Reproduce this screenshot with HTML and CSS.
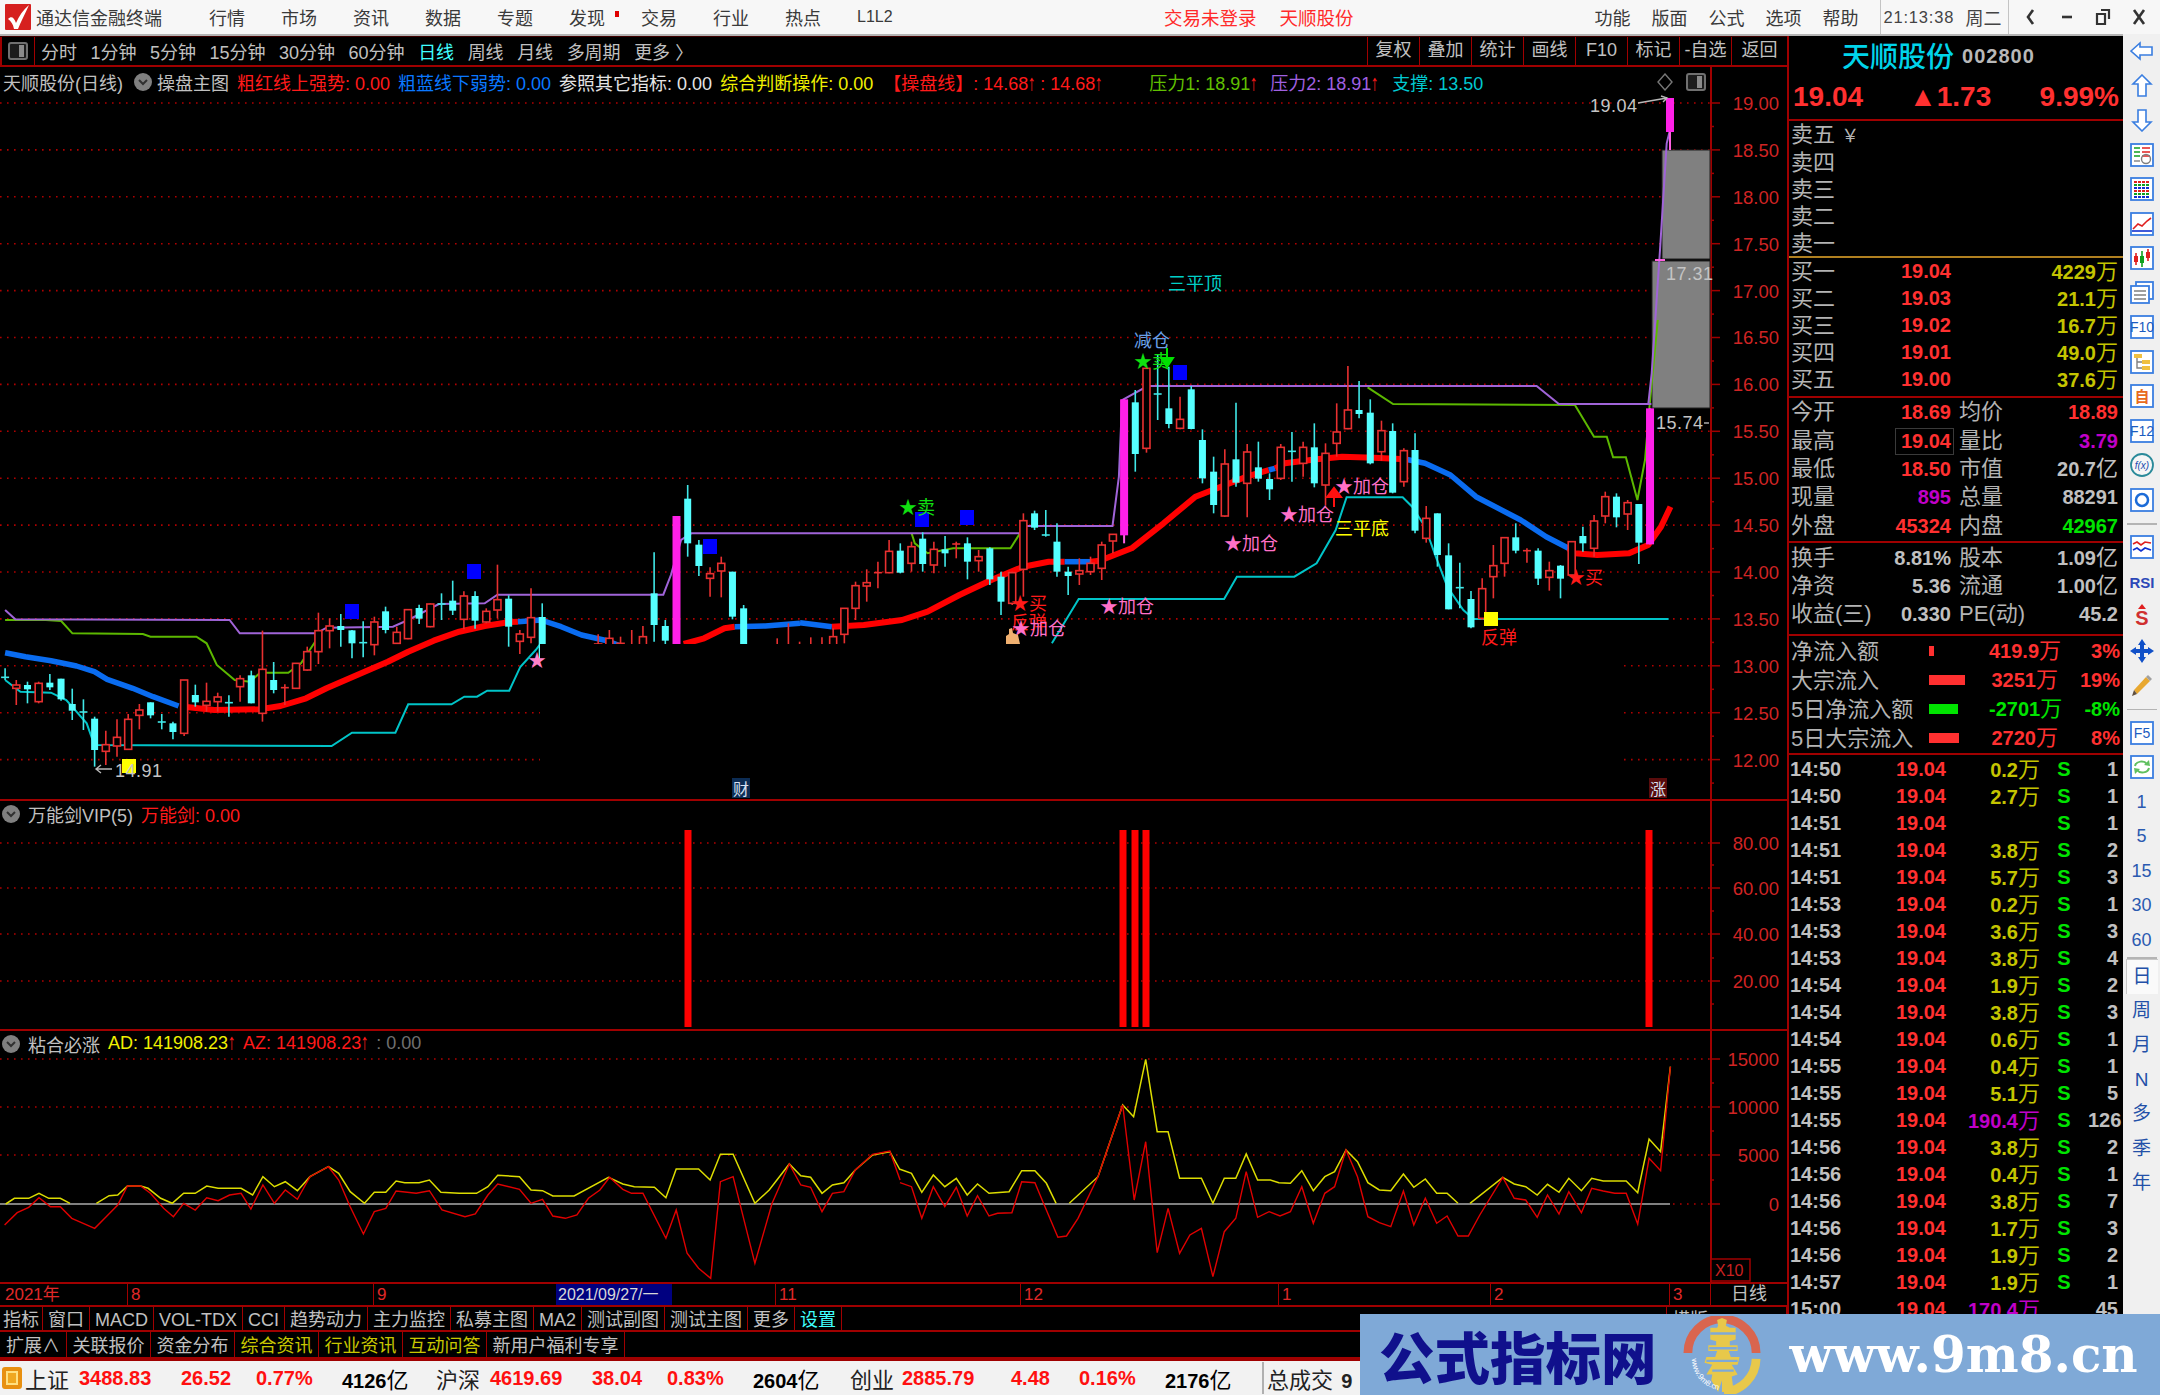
FILE: index.html
```html
<!DOCTYPE html>
<html lang="zh-CN">
<head>
<meta charset="utf-8">
<title>通达信金融终端</title>
<link rel="stylesheet" href="styles.css">
</head>
<body>
<div class="app">
  <header class="titlebar">
    <svg class="logo" viewBox="0 0 26 26"><rect class="logo-bg" width="26" height="26" rx="1"/><path class="logo-mark" d="M3 15 C6 12 9 13 11 19 C14 12 18 6 24 1 C20 10 16 17 13 25 L9 25 C8 20 6 17 3 15Z"/></svg>
    <span class="app-name">通达信金融终端</span>
    <nav class="menu menu-left">
      <span>行情</span><span>市场</span><span>资讯</span><span>数据</span><span>专题</span><span class="has-dot">发现</span><span>交易</span><span>行业</span><span>热点</span><span class="thin">L1L2</span>
    </nav>
    <span class="red-title login">交易未登录</span>
    <span class="red-title stock">天顺股份</span>
    <nav class="menu menu-right"><span>功能</span><span>版面</span><span>公式</span><span>选项</span><span>帮助</span></nav>
    <div class="clock"><span class="time">21:13:38</span><span>周二</span></div>
    <div class="winctl">
      <svg viewBox="0 0 18 18"><path class="ctl" d="M11 2 L6 9 L11 16"/></svg>
      <svg viewBox="0 0 18 18"><path class="ctl" d="M4 9 H14"/></svg>
      <svg viewBox="0 0 18 18"><path class="ctl-thin" d="M7 2 H15 V11 M3 6 H11 V16 H3 Z"/></svg>
      <svg viewBox="0 0 18 18"><path class="ctl" d="M4 2 L14 16 M14 2 L4 16"/></svg>
    </div>
  </header>

  <div class="main">
    <section class="chartcol">
      <div class="toolbar">
        <div class="tb-icon"><svg class="mini-btn" viewBox="0 0 20 18"><rect class="mb-o" x="1" y="1" width="18" height="16" rx="2"/><rect class="mb-i" x="11" y="3" width="5" height="12"/></svg></div>
        <div class="tb-periods">
          <span>分时</span><span>1分钟</span><span>5分钟</span><span>15分钟</span><span>30分钟</span><span>60分钟</span><span class="cyan">日线</span><span>周线</span><span>月线</span><span>多周期</span><span>更多 〉</span>
        </div>
        <div class="tb-actions">
          <span>复权</span><span>叠加</span><span>统计</span><span>画线</span><span>F10</span><span>标记</span><span>-自选</span><span>返回</span>
        </div>
      </div>

      <div class="pane pane-main">
        <div class="pane-head head-main">
          <span class="g">天顺股份(日线)</span>
          <svg class="chev" viewBox="0 0 18 18"><circle class="chev-c" cx="9" cy="9" r="9"/><path class="chev-p" d="M5 7 L9 11 L13 7"/></svg>
          <span class="g">操盘主图</span>
          <span class="red">粗红线上强势: 0.00</span>
          <span class="blue">粗蓝线下弱势: 0.00</span>
          <span class="white">参照其它指标: 0.00</span>
          <span class="yellow">综合判断操作: 0.00</span>
          <span class="red wide">【操盘线】: 14.68<b>↑</b> : 14.68<b>↑</b></span>
          <span class="lime">压力1: 18.91<b class="red">↑</b></span>
          <span class="purple">压力2: 18.91<b class="red">↑</b></span>
          <span class="teal">支撑: 13.50</span>
          <span class="head-tools">
            <svg class="diamond" viewBox="0 0 18 18"><path class="dia" d="M9 1 L16 9 L9 17 L2 9 Z"/></svg>
            <svg class="mini-btn" viewBox="0 0 20 18"><rect class="mb-o" x="1" y="1" width="18" height="16" rx="2"/><rect class="mb-i" x="11" y="3" width="5" height="12"/></svg>
          </span>
        </div>
        <svg class="pane-svg" viewBox="0 67 1787 733" width="1787" height="733">
          <g id="grid-main"></g>
          <rect class="grey-box" x="1662" y="150" width="48" height="109"/>
          <rect class="grey-box" x="1652" y="261" width="58" height="147"/>
          <g id="lines-main"></g>
          <g id="ma-main"></g>
          <g id="candles"></g>
          <rect class="mask" x="540" y="644" width="1082" height="131"/>
          <rect class="sq-blue" x="345" y="604" width="14" height="15"/>
          <rect class="sq-blue" x="467" y="564" width="14" height="15"/>
          <rect class="sq-blue" x="703" y="539" width="14" height="15"/>
          <rect class="sq-blue" x="915" y="512" width="14" height="15"/>
          <rect class="sq-blue" x="960" y="510" width="14" height="15"/>
          <rect class="sq-blue" x="1173" y="365" width="14" height="15"/>
          <rect class="sq-yellow" x="122" y="759" width="14" height="14"/>
          <rect class="sq-yellow" x="1484" y="612" width="14" height="14"/>
          <rect class="tile-blue" x="732" y="778" width="18" height="20"/>
          <rect class="tile-red" x="1649" y="778" width="18" height="20"/>
          <text class="tile-t" x="741" y="795">财</text>
          <text class="tile-t" x="1658" y="795">涨</text>

          <text class="ann cyan-t" x="1168" y="290">三平顶</text>
          <text class="ann sky-t" x="1134" y="347">减仓</text>
          <text class="ann green-t" x="1134" y="368">★卖</text>
          <text class="ann green-t" x="899" y="514">★卖</text>
          <path class="arrow-g" d="M1167 348 V360 M1161 358 H1173 L1167 367 Z"/>
          <text class="ann pink-t" x="1100" y="613">★加仓</text>
          <text class="ann pink-t" x="1224" y="550">★加仓</text>
          <text class="ann pink-t" x="1280" y="521">★加仓</text>
          <text class="ann pink-t" x="1335" y="493">★加仓</text>
          <text class="ann red-t" x="1011" y="629">反弹</text>
          <text class="ann pink-t" x="1012" y="635">★加仓</text>
          <text class="ann yellow-t" x="1335" y="535">三平底</text>
          <text class="ann red-t" x="1011" y="610">★买</text>
          <text class="ann red-t" x="1567" y="584">★买</text>
          <text class="ann red-t" x="1481" y="644">反弹</text>
          <path class="arrow-r" d="M1334 507 V496 M1327 497 L1334 488 L1341 497 Z"/>
          <path class="hand" d="M1006 644 V636 L1009 634 V629 L1012 628 L1013 633 L1018 635 L1020 644 Z"/>
          <text class="pink-star" x="528" y="667">★</text>

          <text class="lbl" x="1590" y="112">19.04</text>
          <path class="lbl-line" d="M1638 103 L1667 98 M1661 96 L1667 98 L1663 102"/>
          <text class="lbl" x="1666" y="280">17.31</text>
          <text class="lbl" x="1656" y="429">15.74</text>
          <path class="lbl-line" d="M1704 423 H1709"/>
          <text class="lbl" x="115" y="777">14.91</text>
          <path class="lbl-line" d="M96 769 H112 M101 765 L96 769 L101 773"/>

          <g class="axis-t">
            <text x="1779" y="110">19.00</text><text x="1779" y="157">18.50</text><text x="1779" y="204">18.00</text><text x="1779" y="251">17.50</text><text x="1779" y="298">17.00</text><text x="1779" y="344">16.50</text><text x="1779" y="391">16.00</text><text x="1779" y="438">15.50</text><text x="1779" y="485">15.00</text><text x="1779" y="532">14.50</text><text x="1779" y="579">14.00</text><text x="1779" y="626">13.50</text><text x="1779" y="673">13.00</text><text x="1779" y="720">12.50</text><text x="1779" y="767">12.00</text>
          </g>
        </svg>
      </div>

      <div class="pane pane-sword">
        <div class="pane-head head-sub">
          <svg class="chev" viewBox="0 0 18 18"><circle class="chev-c" cx="9" cy="9" r="9"/><path class="chev-p" d="M5 7 L9 11 L13 7"/></svg>
          <span class="g">万能剑VIP(5)</span>
          <span class="red">万能剑: 0.00</span>
        </div>
        <svg class="pane-svg" viewBox="0 801 1787 229" width="1787" height="229">
          <g id="grid-sword"></g>
          <g class="axis-t">
            <text x="1779" y="850">80.00</text><text x="1779" y="895">60.00</text><text x="1779" y="941">40.00</text><text x="1779" y="988">20.00</text>
          </g>
        </svg>
      </div>

      <div class="pane pane-adz">
        <div class="pane-head head-sub">
          <svg class="chev" viewBox="0 0 18 18"><circle class="chev-c" cx="9" cy="9" r="9"/><path class="chev-p" d="M5 7 L9 11 L13 7"/></svg>
          <span class="g">粘合必涨</span>
          <span class="yellow">AD: 141908.23<b class="red">↑</b></span>
          <span class="red">AZ: 141908.23<b>↑</b></span>
          <span class="dim">: 0.00</span>
        </div>
        <svg class="pane-svg" viewBox="0 1031 1787 253" width="1787" height="253">
          <g id="grid-adz"></g>
          <g id="lines-adz"></g>
          <rect class="x10-box" x="1711" y="1259" width="39" height="22"/>
          <text class="x10" x="1715" y="1276">X10</text>
          <g class="axis-t">
            <text x="1779" y="1066">15000</text><text x="1779" y="1114">10000</text><text x="1779" y="1162">5000</text><text x="1779" y="1211">0</text>
          </g>
        </svg>
      </div>

      <div class="timeaxis">
        <span>2021年</span><span>8</span><span>9</span><span class="cursor-date">2021/09/27/一</span><span class="blank"></span><span>11</span><span>12</span><span>1</span><span>2</span><span>3</span><span class="ax-period">日线</span>
      </div>
      <div class="tabs tabs-1">
        <span>指标</span><span>窗口</span><span>MACD</span><span>VOL-TDX</span><span>CCI</span><span>趋势动力</span><span>主力监控</span><span>私募主图</span><span>MA2</span><span>测试副图</span><span>测试主图</span><span>更多</span><span class="cyan">设置</span>
        <span class="tab-right">横版</span>
      </div>
      <div class="tabs tabs-2">
        <span>扩展∧</span><span>关联报价</span><span>资金分布</span><span class="olive">综合资讯</span><span class="olive">行业资讯</span><span class="olive">互动问答</span><span>新用户福利专享</span>
      </div>
    </section>

    <aside class="quote">
      <div class="q-name"><span class="stock-name">天顺股份</span><span class="stock-code">002800</span></div>
      <div class="q-price"><span>19.04</span><span class="q-change">▲1.73</span><span>9.99%</span></div>

      <div class="q-sec sec-sell">
        <div class="q"><span class="l">卖五 <i class="yen">￥</i></span></div>
        <div class="q"><span class="l">卖四</span></div>
        <div class="q"><span class="l">卖三</span></div>
        <div class="q"><span class="l">卖二</span></div>
        <div class="q"><span class="l">卖一</span></div>
      </div>
      <div class="q-sec sec-buy">
        <div class="q"><span class="l">买一</span><span class="v c-red">19.04</span><span class="v2 c-olive">4229<i class="u">万</i></span></div>
        <div class="q"><span class="l">买二</span><span class="v c-red">19.03</span><span class="v2 c-olive">21.1<i class="u">万</i></span></div>
        <div class="q"><span class="l">买三</span><span class="v c-red">19.02</span><span class="v2 c-olive">16.7<i class="u">万</i></span></div>
        <div class="q"><span class="l">买四</span><span class="v c-red">19.01</span><span class="v2 c-olive">49.0<i class="u">万</i></span></div>
        <div class="q"><span class="l">买五</span><span class="v c-red">19.00</span><span class="v2 c-olive">37.6<i class="u">万</i></span></div>
      </div>
      <div class="q-sec sec-stat">
        <div class="q"><span class="l">今开</span><span class="v c-red">18.69</span><span class="l2">均价</span><span class="v2 c-red">18.89</span></div>
        <div class="q"><span class="l">最高</span><span class="v c-red boxed">19.04</span><span class="l2">量比</span><span class="v2 c-mag">3.79</span></div>
        <div class="q"><span class="l">最低</span><span class="v c-red">18.50</span><span class="l2">市值</span><span class="v2 c-gray">20.7<i class="u">亿</i></span></div>
        <div class="q"><span class="l">现量</span><span class="v c-mag">895</span><span class="l2">总量</span><span class="v2 c-gray">88291</span></div>
        <div class="q"><span class="l">外盘</span><span class="v c-red">45324</span><span class="l2">内盘</span><span class="v2 c-green">42967</span></div>
      </div>
      <div class="q-sec sec-fund">
        <div class="q"><span class="l">换手</span><span class="v c-gray">8.81%</span><span class="l2">股本</span><span class="v2 c-gray">1.09<i class="u">亿</i></span></div>
        <div class="q"><span class="l">净资</span><span class="v c-gray">5.36</span><span class="l2">流通</span><span class="v2 c-gray">1.00<i class="u">亿</i></span></div>
        <div class="q"><span class="l">收益(三)</span><span class="v c-gray">0.330</span><span class="l2">PE(动)</span><span class="v2 c-gray">45.2</span></div>
      </div>
      <div class="q-sec sec-flow">
        <div class="f"><span class="l">净流入额</span><span class="fbar"><i class="bar-r" style="width:5px"></i></span><span class="fv c-red">419.9<i class="u">万</i></span><span class="fp c-red">3%</span></div>
        <div class="f"><span class="l">大宗流入</span><span class="fbar"><i class="bar-r" style="width:36px"></i></span><span class="fv c-red">3251<i class="u">万</i></span><span class="fp c-red">19%</span></div>
        <div class="f"><span class="l">5日净流入额</span><span class="fbar"><i class="bar-g" style="width:29px"></i></span><span class="fv c-green">-2701<i class="u">万</i></span><span class="fp c-green">-8%</span></div>
        <div class="f"><span class="l">5日大宗流入</span><span class="fbar"><i class="bar-r" style="width:30px"></i></span><span class="fv c-red">2720<i class="u">万</i></span><span class="fp c-red">8%</span></div>
      </div>
      <div class="ticks">
        <div class="t"><b>14:50</b><b class="c-red">19.04</b><b class="c-olive">0.2<i class="u">万</i></b><b class="c-green">S</b><b>1</b></div>
        <div class="t"><b>14:50</b><b class="c-red">19.04</b><b class="c-olive">2.7<i class="u">万</i></b><b class="c-green">S</b><b>1</b></div>
        <div class="t"><b>14:51</b><b class="c-red">19.04</b><b class="c-olive"></b><b class="c-green">S</b><b>1</b></div>
        <div class="t"><b>14:51</b><b class="c-red">19.04</b><b class="c-olive">3.8<i class="u">万</i></b><b class="c-green">S</b><b>2</b></div>
        <div class="t"><b>14:51</b><b class="c-red">19.04</b><b class="c-olive">5.7<i class="u">万</i></b><b class="c-green">S</b><b>3</b></div>
        <div class="t"><b>14:53</b><b class="c-red">19.04</b><b class="c-olive">0.2<i class="u">万</i></b><b class="c-green">S</b><b>1</b></div>
        <div class="t"><b>14:53</b><b class="c-red">19.04</b><b class="c-olive">3.6<i class="u">万</i></b><b class="c-green">S</b><b>3</b></div>
        <div class="t"><b>14:53</b><b class="c-red">19.04</b><b class="c-olive">3.8<i class="u">万</i></b><b class="c-green">S</b><b>4</b></div>
        <div class="t"><b>14:54</b><b class="c-red">19.04</b><b class="c-olive">1.9<i class="u">万</i></b><b class="c-green">S</b><b>2</b></div>
        <div class="t"><b>14:54</b><b class="c-red">19.04</b><b class="c-olive">3.8<i class="u">万</i></b><b class="c-green">S</b><b>3</b></div>
        <div class="t"><b>14:54</b><b class="c-red">19.04</b><b class="c-olive">0.6<i class="u">万</i></b><b class="c-green">S</b><b>1</b></div>
        <div class="t"><b>14:55</b><b class="c-red">19.04</b><b class="c-olive">0.4<i class="u">万</i></b><b class="c-green">S</b><b>1</b></div>
        <div class="t"><b>14:55</b><b class="c-red">19.04</b><b class="c-olive">5.1<i class="u">万</i></b><b class="c-green">S</b><b>5</b></div>
        <div class="t"><b>14:55</b><b class="c-red">19.04</b><b class="c-mag">190.4<i class="u">万</i></b><b class="c-green">S</b><b>126</b></div>
        <div class="t"><b>14:56</b><b class="c-red">19.04</b><b class="c-olive">3.8<i class="u">万</i></b><b class="c-green">S</b><b>2</b></div>
        <div class="t"><b>14:56</b><b class="c-red">19.04</b><b class="c-olive">0.4<i class="u">万</i></b><b class="c-green">S</b><b>1</b></div>
        <div class="t"><b>14:56</b><b class="c-red">19.04</b><b class="c-olive">3.8<i class="u">万</i></b><b class="c-green">S</b><b>7</b></div>
        <div class="t"><b>14:56</b><b class="c-red">19.04</b><b class="c-olive">1.7<i class="u">万</i></b><b class="c-green">S</b><b>3</b></div>
        <div class="t"><b>14:56</b><b class="c-red">19.04</b><b class="c-olive">1.9<i class="u">万</i></b><b class="c-green">S</b><b>2</b></div>
        <div class="t"><b>14:57</b><b class="c-red">19.04</b><b class="c-olive">1.9<i class="u">万</i></b><b class="c-green">S</b><b>1</b></div>
        <div class="t"><b>15:00</b><b class="c-red">19.04</b><b class="c-mag">170.4<i class="u">万</i></b><b></b><b>45</b></div>
      </div>
    </aside>

    <aside class="side">
      <div class="si first"><svg viewBox="0 0 24 24"><path class="ic-out" d="M1 12 L10 4 V8 H22 V16 H10 V20 Z"/></svg></div>
      <div class="si"><svg viewBox="0 0 24 24"><path class="ic-out" d="M12 1 L21 10 H16 V22 H8 V10 H3 Z"/></svg></div>
      <div class="si"><svg viewBox="0 0 24 24"><path class="ic-out" d="M12 23 L21 14 H16 V2 H8 V14 H3 Z"/></svg></div>
      <div class="si"><svg viewBox="0 0 24 24"><rect class="ic-box" x="1" y="1" width="22" height="22"/><path class="s-green" d="M4 5 H10 M4 9 H10 M4 13 H10"/><path class="s-red" d="M12 5 H20 M12 9 H20 M12 13 H20"/><circle class="s-gray" cx="16" cy="16" r="4.5"/><path class="s-gray" d="M4 18 H10"/></svg></div>
      <div class="si"><svg viewBox="0 0 24 24"><rect class="ic-box" x="1" y="1" width="22" height="22"/><path class="s-red d2" d="M4 5 H20"/><path class="s-green d2" d="M4 8 H20"/><path class="s-blue d2" d="M4 11 H20"/><path class="s-red d2" d="M4 14 H20"/><path class="s-green d2" d="M4 17 H20"/><path class="s-blue d2" d="M4 20 H20"/></svg></div>
      <div class="si"><svg viewBox="0 0 24 24"><rect class="ic-box" x="1" y="1" width="22" height="22"/><path class="s-red" d="M3 17 L8 12 L12 14 L17 9 L21 6"/><path class="s-blue" d="M2 19 H22"/></svg></div>
      <div class="si"><svg viewBox="0 0 24 24"><rect class="ic-box" x="1" y="1" width="22" height="22"/><path class="s-red" d="M6 7 V19"/><path class="s-green" d="M12 5 V21"/><path class="s-red" d="M18 3 V15"/><rect class="f-red" x="4" y="10" width="4" height="6"/><rect class="f-green" x="10" y="10" width="4" height="7"/><rect class="f-red" x="16" y="6" width="4" height="6"/></svg></div>
      <div class="si"><svg viewBox="0 0 24 24"><rect class="ic-box" x="6" y="1" width="17" height="17"/><rect class="ic-box" x="1" y="5" width="18" height="17"/><path class="s-gray" d="M4 10 H16 M4 14 H16 M4 18 H16"/></svg></div>
      <div class="si"><svg viewBox="0 0 24 24"><rect class="ic-box" x="1" y="1" width="22" height="22"/><text class="ic-t" x="12" y="17">F10</text></svg></div>
      <div class="si"><svg viewBox="0 0 24 24"><rect class="ic-box" x="1" y="1" width="22" height="22"/><rect class="f-gold" x="4" y="4" width="8" height="4"/><rect class="f-gold" x="12" y="10" width="8" height="4"/><rect class="f-gold" x="12" y="16" width="8" height="4"/><path class="s-gray" d="M7 8 V18 H12 M7 12 H12"/></svg></div>
      <div class="si"><svg viewBox="0 0 24 24"><rect class="ic-box" x="1" y="1" width="22" height="22"/><text class="ic-t orange" x="12" y="18">自</text></svg></div>
      <div class="si"><svg viewBox="0 0 24 24"><rect class="ic-box" x="1" y="1" width="22" height="22"/><text class="ic-t" x="12" y="17">F12</text></svg></div>
      <div class="si"><svg viewBox="0 0 24 24"><circle class="ic-teal" cx="12" cy="12" r="11"/><text class="ic-fx" x="12" y="16">f(x)</text></svg></div>
      <div class="si"><svg viewBox="0 0 24 24"><rect class="ic-box" x="1" y="1" width="22" height="22"/><circle class="ic-ring" cx="12" cy="12" r="6"/></svg></div>
      <div class="sep"></div>
      <div class="si"><svg viewBox="0 0 24 24"><rect class="ic-box" x="1" y="1" width="22" height="22"/><path class="s-red" d="M3 9 L7 7 L11 10 L15 7 L21 8"/><path class="s-blue" d="M3 15 L7 13 L11 16 L15 13 L21 15"/></svg></div>
      <div class="si"><svg viewBox="0 0 24 24"><text class="ic-rsi" x="12" y="18">RSI</text></svg></div>
      <div class="si"><svg viewBox="0 0 24 24"><text class="ic-s" x="12" y="21">S</text><path class="f-red" d="M12 0 L16 5 H8 Z"/></svg></div>
      <div class="si"><svg viewBox="0 0 24 24"><path class="f-blue" d="M12 0 L16 6 H14 V10 H18 V8 L24 12 L18 16 V14 H14 V18 H16 L12 24 L8 18 H10 V14 H6 V16 L0 12 L6 8 V10 H10 V6 H8 Z"/></svg></div>
      <div class="si"><svg viewBox="0 0 24 24"><path class="f-gold2" d="M4 17 L16 4 L20 8 L7 21 Z"/><path class="f-dark" d="M2 23 L4 17 L7 21 Z"/><path class="f-pink" d="M16 4 L18 2 L22 6 L20 8 Z"/></svg></div>
      <div class="sep"></div>
      <div class="si"><svg viewBox="0 0 24 24"><rect class="ic-box" x="1" y="1" width="22" height="22"/><text class="ic-t" x="12" y="17">F5</text></svg></div>
      <div class="si"><svg viewBox="0 0 24 24"><rect class="ic-box" x="1" y="1" width="22" height="22"/><path class="s-lgreen" d="M5 11 C6 6 14 5 17 9 M19 13 C18 18 10 19 7 15"/><path class="f-lgreen" d="M14 10 L20 11 L19 5 Z M10 14 L4 13 L5 19 Z"/></svg></div>
      <div class="sn">1</div><div class="sn">5</div><div class="sn">15</div><div class="sn">30</div><div class="sn">60</div>
      <div class="sep thin"></div>
      <div class="sc active">日</div><div class="sc">周</div><div class="sc">月</div><div class="sc">N</div><div class="sc">多</div><div class="sc">季</div><div class="sc">年</div>
    </aside>
  </div>

  <footer class="status">
    <i class="st-icon"></i>
    <span class="st-l">上证</span><span class="st-n">3488.83</span><span class="st-n">26.52</span><span class="st-n">0.77%</span><span class="st-a">4126<i class="u">亿</i></span>
    <span class="st-l">沪深</span><span class="st-n">4619.69</span><span class="st-n">38.04</span><span class="st-n">0.83%</span><span class="st-a">2604<i class="u">亿</i></span>
    <span class="st-l">创业</span><span class="st-n">2885.79</span><span class="st-n">4.48</span><span class="st-n">0.16%</span><span class="st-a">2176<i class="u">亿</i></span>
    <span class="st-total">总成交 <b>9</b></span>
  </footer>

  <div class="banner">
    <span class="banner-title">公式指标网</span>
    <svg class="banner-logo" viewBox="0 0 80 80">
      <path class="bl-red" d="M5 38 A35 35 0 0 1 75 38"/>
      <path class="bl-yel" d="M75 44 A35 35 0 0 1 42 78"/>
      <path class="bl-fig" d="M40 2 L45 4 L44 10 L48 12 L54 12 V24 L48 26 V30 H56 V36 H47 L49 42 L58 42 L56 50 L50 50 L56 60 L50 62 L52 78 L40 78 L40 66 L36 78 L29 66 L30 60 L24 60 L30 50 L22 48 L24 42 L33 42 L35 36 L26 36 V30 H34 V26 L28 24 V12 L35 12 L36 10 L35 4 Z"/>
      <path class="bl-cut" d="M28 18 H54 M27 33 H55 M24 46 H56 M30 56 H52"/>
      <path id="curve" class="bl-none" d="M9 44 A33 33 0 0 0 38 76"/>
      <text class="bl-text"><textPath href="#curve">www.9m8.cn</textPath></text>
    </svg>
    <span class="banner-url">www.9m8.cn</span>
  </div>
</div>
<script src="chart.js"></script>
</body>
</html>
```

FILE: styles.css
```css
* { box-sizing: border-box; }
html, body { margin: 0; padding: 0; background: #000; }
body { font-family: "Liberation Sans", "Noto Sans CJK SC", sans-serif; font-size: 18px; color: #c0c0c0; }
i, b { font-style: normal; }
.app { position: relative; width: 2160px; height: 1395px; overflow: hidden; background: #000; }

/* title bar */
.titlebar { display: flex; align-items: center; height: 36px; padding-left: 5px; background: #f7f7f7; border-bottom: 2px solid #b4b4b4; color: #333; white-space: nowrap; }
.logo { width: 26px; height: 26px; flex: none; }
.logo-bg { fill: #d6201f; }
.logo-mark { fill: #fff; }
.app-name { margin-left: 5px; width: 126px; font-size: 18px; color: #3a3a3a; }
.menu { display: flex; align-items: center; }
.menu span { display: block; width: 36px; font-size: 18px; color: #3a3a3a; }
.menu-left { margin-left: 47px; gap: 36px; }
.menu-left .thin { font-size: 16px; }
.has-dot { position: relative; }
.has-dot::after { content: ""; position: absolute; left: 46px; top: 7px; width: 4px; height: 6px; background: #e00000; }
.red-title { font-size: 18.5px; color: #ff2a2a; }
.login { margin-left: 271px; }
.stock { margin-left: 23px; }
.menu-right { margin-left: 241px; gap: 21px; }
.clock { display: flex; align-items: center; gap: 8px; margin-left: 21px; padding: 0 6px 0 3px; height: 34px; border-left: 1px solid #c4c4c4; border-right: 1px solid #c4c4c4; color: #444; }
.time { font-size: 16.5px; letter-spacing: .8px; width: 74px; }
.winctl { display: flex; align-items: center; gap: 18px; margin-left: 13px; }
.winctl svg { width: 18px; height: 18px; }
.ctl { fill: none; stroke: #333; stroke-width: 2.6; }
.ctl-thin { fill: none; stroke: #333; stroke-width: 2.2; }

/* layout */
.main { display: flex; height: 1323px; }
.chartcol { width: 1787px; flex: none; }

/* toolbar */
.toolbar { display: flex; height: 31px; border-bottom: 2px solid #a00000; border-top: 1px solid #400000; }
.tb-icon { width: 35px; border-left: 2px solid #a00000; border-right: 1px solid #a00000; display: flex; align-items: center; justify-content: center; }
.mini-btn { width: 20px; height: 18px; }
.mb-o { fill: #1c1c1c; stroke: #707070; stroke-width: 2; }
.mb-i { fill: #8a8a8a; }
.tb-periods { display: flex; align-items: center; gap: 13.5px; padding-left: 6px; font-size: 18px; white-space: nowrap; }
.tb-actions { display: flex; margin-left: auto; }
.tb-actions span { width: 52px; border-left: 1px solid #a00000; text-align: center; line-height: 27px; font-size: 18px; white-space: nowrap; }
.tb-actions span:last-child { width: 56px; }
.cyan { color: #40ffff; }

/* panes */
.pane { position: relative; width: 1787px; border-bottom: 2px solid #a00000; }
.pane-main { height: 734px; }
.pane-sword { height: 230px; }
.pane-adz { height: 253px; }
.pane-svg { display: block; }
.pane-head { position: absolute; left: 0; top: -1px; z-index: 2; display: flex; align-items: center; height: 27px; width: 1710px; white-space: nowrap; font-size: 18px; }
.pane-head b { font-weight: 700; font-size: 22px; line-height: 18px; display: inline-block; transform: scaleX(.75); margin: 0 -2px; }
.head-main { gap: 8px; padding-left: 3px; top: 1px; }
.head-main .chev { margin: 0 -3px 0 3px; }
.head-main .wide { margin-left: 2px; width: 258px; }
.head-main .purple { margin-left: 5px; }
.head-main .teal { margin-left: 6px; }
.head-tools { margin-left: auto; margin-right: 4px; display: flex; align-items: center; gap: 12px; }
.head-sub { gap: 8px; padding-left: 2px; }
.chev { width: 18px; height: 18px; flex: none; }
.chev-c { fill: #808080; }
.chev-p { fill: none; stroke: #303030; stroke-width: 2; }
.diamond { width: 18px; height: 18px; }
.dia { fill: none; stroke: #777; stroke-width: 1.4; }
.g { color: #c0c0c0; }
.red { color: #ff1a1a; }
.blue { color: #0a78ff; }
.white { color: #e4e4e4; }
.yellow { color: #f0f000; }
.lime { color: #60c000; }
.purple { color: #a060e0; }
.teal { color: #00c8d0; }
.dim { color: #707070; }
.olive { color: #c8c800; }

/* chart svg parts */
.grid-dot { stroke: #b00000; stroke-width: 1.6; stroke-dasharray: 1.6 5.4; fill: none; }
.axis-line { stroke: #a00000; stroke-width: 2; }
.axis-tick { stroke: #a00000; stroke-width: 1.5; }
.axis-t text { fill: #d02424; font-size: 18.5px; text-anchor: end; }
.grey-box { fill: #808080; stroke: #202020; stroke-width: 1; }
.mask { fill: #000; }
.l-cyan { fill: none; stroke: #00c4c8; stroke-width: 2; }
.l-green { fill: none; stroke: #5cb800; stroke-width: 2; }
.l-purple { fill: none; stroke: #a064d8; stroke-width: 2; }
.ma-red { fill: none; stroke: #ff0000; stroke-width: 6; stroke-linejoin: round; }
.ma-blue { fill: none; stroke: #0a6cf0; stroke-width: 5.5; stroke-linejoin: round; }
.c-wick-r { stroke: #e83030; stroke-width: 1.6; }
.c-wick-c { stroke: #40e8e8; stroke-width: 1.6; }
.c-body-r { fill: #000; stroke: #e83030; stroke-width: 1.6; }
.c-body-c { fill: #55ffff; }
.c-body-m { fill: #ff20e8; }
.c-wick-m { stroke: #ff60e0; stroke-width: 2; }
.sq-blue { fill: #0000ff; }
.sq-yellow { fill: #ffff00; }
.tile-blue { fill: #0c2c54; }
.tile-red { fill: #5a0c0c; }
.tile-t { fill: #d8e0f0; font-size: 16px; text-anchor: middle; }
.ann { font-size: 18px; }
.cyan-t { fill: #00d0c8; }
.sky-t { fill: #6aa0e8; }
.green-t { fill: #10e010; }
.pink-t { fill: #ff70c8; }
.yellow-t { fill: #ffff00; }
.red-t { fill: #ff1a1a; }
.pink-star { fill: #ff80c8; font-size: 18px; }
.arrow-g { fill: #00e000; stroke: #00e000; stroke-width: 2; }
.arrow-r { fill: #ff1010; stroke: #ff1010; stroke-width: 2; }
.hand { fill: #f0b070; }
.lbl { fill: #c4c4c4; font-size: 18px; letter-spacing: .5px; }
.lbl-line { fill: none; stroke: #b8b8b8; stroke-width: 1.4; }
.bar-sword { fill: #ff0000; }
.l-yellow { fill: none; stroke: #dcdc00; stroke-width: 1.5; }
.l-red { fill: none; stroke: #e00000; stroke-width: 1.4; }
.zero { stroke: #808080; stroke-width: 2; }
.x10-box { fill: #000; stroke: #a00000; stroke-width: 1.5; }
.x10 { fill: #c82020; font-size: 16px; }

/* time axis & tabs */
.timeaxis { display: grid; grid-template-columns: 127px 246px 183px 116px 103px 245px 258px 212px 179px 41px 77px; height: 23px; line-height: 21px; border-bottom: 2px solid #a00000; color: #e02828; font-size: 17px; background: #000; }
.timeaxis span { border-left: 1px solid #a00000; padding-left: 3px; }
.timeaxis span:first-child { border-left: 0; padding-left: 5px; }
.timeaxis .cursor-date { background: #000080; color: #d8d8d8; font-size: 16px; padding-left: 2px; white-space: nowrap; border-left: 0; }
.timeaxis .blank { border-left: 0; }
.timeaxis .ax-period { color: #c0c0c0; text-align: center; padding: 0; font-size: 18px; }
.tabs { display: flex; white-space: nowrap; font-size: 18px; border-bottom: 2px solid #a00000; }
.tabs span { padding: 0 5px; border-right: 1px solid #a00000; line-height: 26px; }
.tabs-1 { height: 25px; }
.tabs-1 span { height: 23px; overflow: hidden; }
.tabs-1 span:first-child { padding: 0 3px; }
.tabs-1 .tab-right { margin-left: auto; border-left: 1px solid #a00000; padding-right: 78px; }
.tabs-2 { height: 27px; }
.tabs-2 span { line-height: 28px; height: 25px; overflow: hidden; padding: 0 5.5px; }
.tabs-2 span:first-child { padding: 0 6px; }

/* quote */
.quote { width: 336px; flex: none; border-left: 2px solid #a00000; overflow: hidden; }
.q-name { display: flex; align-items: center; height: 38px; padding: 0 0 0 53px; }
.stock-name { color: #00d4ea; font-size: 28px; letter-spacing: 0; font-weight: 500; }
.stock-code { margin-left: 8px; font-size: 20px; font-weight: 700; letter-spacing: 1px; color: #b8b8b8; margin-top: 3px; }
.q-price { display: grid; grid-template-columns: 116px 124px 1fr; align-items: center; height: 45px; padding: 0 4px 0 4px; font-size: 28px; font-weight: 700; color: #ff3030; }
.q-price span:last-child { text-align: right; }
.q-sec { border-top: 2px solid #a00000; padding-left: 2px; padding-right: 5px; }
.sec-sell { height: 137px; padding-top: 1px; }
.sec-buy { height: 140px; border-top-color: #b08020; }
.sec-stat { height: 145px; }
.sec-fund { height: 93px; padding-top: 1px; }
.sec-flow { height: 119px; padding-right: 3px; }
.q { display: flex; height: 27px; line-height: 27px; align-items: center; white-space: nowrap; }
.sec-stat .q { height: 28.4px; line-height: 28px; }
.sec-fund .q { height: 28px; line-height: 28px; }
.l { display: block; width: 100px; font-size: 22px; color: #b4b4b4; flex: none; }
.l2 { display: block; margin-left: 8px; font-size: 22px; color: #b4b4b4; }
.v { display: block; width: 60px; text-align: right; font-weight: 700; font-size: 20px; flex: none; }
.v2 { display: block; margin-left: auto; text-align: right; font-weight: 700; font-size: 20px; }
.u { font-weight: 400; font-size: 22px; }
.yen { font-size: 18px; }
.boxed { position: relative; }
.boxed::before { content: ""; position: absolute; left: 4px; right: -3px; top: 1px; bottom: 0; border: 1px solid #3a3a3a; }
.c-red { color: #ff3030; }
.c-olive { color: #c4c400; }
.c-mag { color: #c000c8; }
.c-gray { color: #c0c0c0; }
.c-green { color: #00e400; }
.f { display: grid; grid-template-columns: 138px 60px 69px 1fr; height: 29px; line-height: 29px; align-items: center; white-space: nowrap; }
.f .l { width: 138px; }
.fbar { display: flex; align-items: center; }
.fbar i { display: block; height: 10px; }
.bar-r { background: #ff3030; }
.bar-g { background: #00e400; }
.fv, .fp { text-align: right; font-weight: 700; font-size: 20px; }
.ticks { border-top: 2px solid #a00000; padding: 1px 5px 0 1px; }
.t { display: grid; grid-template-columns: 52px 104px 94px 48px 1fr; height: 27px; line-height: 27px; font-size: 20px; font-weight: 700; color: #c0c0c0; white-space: nowrap; }
.t b { text-align: right; }
.t b:first-child { text-align: left; }
.t b:nth-child(4) { text-align: center; }

/* sidebar */
.side { width: 37px; flex: none; background: #f0f0f0; display: flex; flex-direction: column; align-items: center; margin-top: -2px; overflow: visible; }
.si { height: 34.5px; flex: none; display: flex; align-items: center; justify-content: center; }
.si svg { width: 24px; height: 24px; }
.sep { width: 30px; height: 13px; flex: none; position: relative; }
.sep::after { content: ""; position: absolute; left: 0; right: 0; top: 6px; height: 1.5px; background: #b4b4b4; }
.sep.thin { height: 2px; }
.sep.thin::after { top: 0; }
.sn { height: 34.5px; line-height: 34.5px; flex: none; font-size: 18px; color: #2a5ab0; text-align: center; }
.sc { height: 34.5px; line-height: 34.5px; flex: none; width: 32px; text-align: center; font-size: 19px; color: #2350a8; }
.sc.active { background: #fafafa; border-left: 1px solid #c8c8c8; border-top: 1px solid #c8c8c8; }
.ic-out { fill: #fff; stroke: #3a7ee0; stroke-width: 1.6; }
.ic-box { fill: #fff; stroke: #3a7ee0; stroke-width: 1.8; }
.s-red { fill: none; stroke: #e02020; stroke-width: 1.6; }
.s-green { fill: none; stroke: #10a020; stroke-width: 1.6; }
.s-blue { fill: none; stroke: #1030d0; stroke-width: 1.6; }
.s-gray { fill: none; stroke: #808080; stroke-width: 1.4; }
.d2 { stroke-width: 2; stroke-dasharray: 3 1; }
.f-red { fill: #e02020; }
.f-green { fill: #10a020; }
.f-gold { fill: #f0c040; }
.f-blue { fill: #1050c8; }
.f-gold2 { fill: #e8a830; }
.f-dark { fill: #605040; }
.f-pink { fill: #a0a0a0; }
.s-lgreen { fill: none; stroke: #60c060; stroke-width: 2; }
.f-lgreen { fill: #60c060; }
.ic-t { fill: #1c5cc0; font-size: 14px; text-anchor: middle; }
.ic-t.orange { fill: #e86a20; font-size: 15px; font-weight: 700; }
.ic-teal { fill: #f6f6f6; stroke: #2a8a9a; stroke-width: 1.8; }
.ic-fx { fill: #1c4cb0; font-size: 10px; font-style: italic; text-anchor: middle; }
.ic-ring { fill: none; stroke: #1c6cd8; stroke-width: 2.5; }
.ic-rsi { fill: #2c48b8; font-size: 15px; font-weight: 700; text-anchor: middle; }
.ic-s { fill: #d03030; font-size: 20px; font-weight: 700; text-anchor: middle; }

/* status bar */
.status { display: grid; grid-template-columns: 25px 54px 102px 75px 86px 94px 54px 102px 75px 86px 97px 52px 109px 68px 86px 97px 1fr; align-items: center; height: 36px; background: #f2f2f2; border-top: 2px solid #a00000; white-space: nowrap; color: #000; }
.st-icon { display: block; width: 20px; height: 22px; margin-left: 2px; border-radius: 3px; background: #f0a820; border: 4px solid #e89010; box-shadow: inset 0 0 0 2px #ffe080; }
.st-l { font-size: 22px; color: #222; }
.st-n { font-size: 20px; font-weight: 700; color: #ff1010; }
.st-a { font-size: 20px; font-weight: 700; color: #000; }
.st-total { border-left: 2px solid #b0b0b0; padding-left: 3px; font-size: 22px; color: #222; }
.st-total b { font-size: 20px; margin-left: 2px; }

/* watermark banner */
.banner { position: absolute; left: 1360px; top: 1314px; width: 800px; height: 81px; z-index: 5; display: flex; align-items: center; padding-left: 19px; background: #7fa9d7; }
.banner-title { font-size: 55.5px; font-weight: 900; color: #10108c; white-space: nowrap; }
.banner-logo { width: 78px; height: 78px; margin-left: 26px; flex: none; }
.bl-red { fill: none; stroke: #d9654f; stroke-width: 9; }
.bl-yel { fill: none; stroke: #e8c84a; stroke-width: 9; }
.bl-fig { fill: #e8c84a; }
.bl-cut { fill: none; stroke: #7fa9d7; stroke-width: 2.5; }
.bl-none { fill: none; }
.bl-text { fill: #fff; font-size: 8px; }
.banner-url { margin-left: 29px; font-family: "DejaVu Serif", serif; font-weight: 700; font-size: 50px; color: #fff; white-space: nowrap; }
```

FILE: chart.js
```js
(function () {
  var NS = 'http://www.w3.org/2000/svg';
  function el(parent, tag, attrs) {
    var n = document.createElementNS(NS, tag);
    for (var k in attrs) n.setAttribute(k, attrs[k]);
    parent.appendChild(n);
    return n;
  }
  var Z8 = function (x, y) { return [x / 1.96, 450 + y / 3]; };
  var Z9 = function (x, y) { return [800 + x / 1.568, 300 + y / 3]; };
  var Z10 = function (x, y) { return [x / 1.742, 1030 + y / 3]; };
  var Z11 = function (x, y) { return [900 + x / 1.742, 1030 + y / 3]; };
  var Z12 = function (x, y) { return [1500 + x / 3, 80 + y / 3]; };

  function pts(zone, flat) {
    var out = [];
    for (var i = 0; i < flat.length; i += 2) {
      var p = zone(flat[i], flat[i + 1]);
      out.push(p[0].toFixed(1) + ',' + p[1].toFixed(1));
    }
    return out.join(' ');
  }
  function line(g, cls, zone, flat) { el(g, 'polyline', { points: pts(zone, flat), class: cls }); }

  /* ---------- grids and axes ---------- */
  function grid(id, ys, top, bottom, minor) {
    var g = document.getElementById(id);
    ys.forEach(function (y) {
      el(g, 'line', { x1: 0, x2: 1710, y1: y, y2: y, class: 'grid-dot' });
      el(g, 'line', { x1: 1710, x2: 1720, y1: y, y2: y, class: 'axis-tick' });
    });
    minor.forEach(function (y) { el(g, 'line', { x1: 1710, x2: 1714, y1: y, y2: y, class: 'axis-tick' }); });
    el(g, 'line', { x1: 1711, x2: 1711, y1: top, y2: bottom, class: 'axis-line' });
  }
  var mainYs = [], mainMinor = [];
  for (var k = 0; k < 15; k++) { mainYs.push(103 + k * 46.9); mainMinor.push(126.5 + k * 46.9); }
  grid('grid-main', mainYs, 67, 800, mainMinor);
  grid('grid-sword', [843, 888, 934, 981], 801, 1031, [865, 911, 958, 1004]);
  grid('grid-adz', [1059, 1107, 1155, 1204], 1031, 1284, [1083, 1131, 1180]);

  /* ---------- overlay lines on the price chart ---------- */
  var lm = document.getElementById('lines-main');
  line(lm, 'l-cyan', Z8, [10,690,40,725,100,728,130,750,170,820,185,885,650,888,690,848,775,848,800,763,885,763,910,740,935,740,955,722,998,722,1020,650,1050,600,1060,580]);
  line(lm, 'l-cyan', Z9, [395,1030,437,897,665,897,685,830,775,830,810,790,840,690,857,592,945,592,960,620,980,680,997,770,1015,860,1040,930,1056,957,1362,957]);
  line(lm, 'l-green', Z8, [10,510,90,510,120,513,142,550,280,552,295,560,385,560,405,580,425,645,460,690,490,695,510,668,565,668,590,640,620,570]);
  line(lm, 'l-green', Z9, [175,700,180,730,200,760,240,745,330,745,345,700]);
  line(lm, 'l-green', Z9, [890,262,930,312,1215,315,1245,410,1265,410,1275,472,1295,472,1313,600,1325,480,1332,320,1345,60]);
  line(lm, 'l-purple', Z8, [10,480,30,508,450,510,470,550,620,550,640,533,770,530,800,510,860,462,950,460,975,434,1300,434,1315,375,1335,270,1355,250,1568,250]);
  line(lm, 'l-purple', Z9, [0,700,345,700,355,678,490,678,500,530,505,300,545,258,1155,258,1190,312,1335,312]);
  line(lm, 'l-purple', Z12, [445,972,455,880,480,510,500,190,510,150]);

  /* ---------- thick trend line ---------- */
  var ma = document.getElementById('ma-main');
  line(ma, 'ma-blue', Z8, [10,608,50,620,100,632,150,648,185,665,210,688,260,715,300,740,350,768]);
  line(ma, 'ma-red', Z8, [355,770,370,772,420,780,510,778,550,768,600,745,640,715,700,675,760,635,800,605,850,572,900,545,950,528,1000,516,1015,515]);
  line(ma, 'ma-blue', Z8, [1015,515,1060,510,1100,530,1140,555,1190,572,1220,590,1260,600,1300,600,1340,590]);
  line(ma, 'ma-red', Z8, [1340,582,1380,565,1420,535,1440,530]);
  line(ma, 'ma-blue', Z8, [1440,530,1500,528,1568,520]);
  line(ma, 'ma-blue', Z9, [0,968,50,980]);
  line(ma, 'ma-red', Z9, [50,980,100,975,160,960,200,935,250,885,300,840,350,800,390,785,415,785]);
  line(ma, 'ma-blue', Z9, [415,785,455,785]);
  line(ma, 'ma-red', Z9, [455,785,470,782,520,745,570,670,620,590,660,560,700,530,735,510]);
  line(ma, 'ma-blue', Z9, [735,510,745,505]);
  line(ma, 'ma-red', Z9, [745,505,760,490,810,478,850,470,900,473,950,478]);
  line(ma, 'ma-blue', Z9, [950,478,980,490,1020,525,1060,590,1130,660,1170,710,1205,745]);
  line(ma, 'ma-red', Z9, [1205,745,1215,760,1250,765,1300,760,1330,735,1350,680,1365,620]);

  /* ---------- candles: [type, high, top, bottom, low] in crop coordinates ---------- */
  var c8 = [
    ['c',655,682,682,690],['r',690,705,715,765],['c',695,705,718,760],['r',695,700,755,760],['c',672,698,712,720],
    ['c',686,686,748,752],['c',716,762,782,810],['c',748,786,786,840],['c',800,806,900,950],['r',842,884,904,945],
    ['r',808,862,888,920],['r',792,808,898,900],['r',762,780,796,838],['c',757,757,796,805],['c',792,816,816,838],
    ['c',815,820,846,868],['r',690,690,850,858],['c',704,735,757,770],['r',698,754,766,785],['r',728,741,755,785],
    ['c',736,758,758,800],['r',676,686,710,755],['c',662,676,760,760],['r',542,658,790,815],['c',636,690,720,730],
    ['r',703,713,718,765],['r',640,640,715,715],['r',590,605,660,662],['r',488,542,605,642],['r',505,528,542,595],
    ['c',492,528,540,590],['c',540,541,580,625],['c',514,578,578,622],['r',500,516,584,616],['c',470,484,540,550],
    ['r',530,547,580,582],['r',478,479,566,568],['c',464,474,506,522],['r',460,462,530,532],['c',430,462,462,510],
    ['c',392,452,482,495],['r',424,438,508,538],['c',424,438,512,536],['r',475,484,516,520],['r',344,449,480,505],
    ['c',436,446,530,590],['r',540,552,574,612],['r',415,503,562,580],['c',460,501,640,640]
  ];
  var c8b = {
    53:['r',553,582,620,640],54:['r',540,565,600,640],55:['r',560,580,620,640],56:['r',540,600,620,640],
    57:['r',528,560,600,640],58:['c',307,430,525,575],59:['c',510,528,572,582],60:['m',198,198,585,585],
    61:['c',105,146,280,320],62:['c',270,284,348,378],63:['r',352,371,385,440],64:['r',320,340,363,442],
    65:['c',365,365,500,508],66:['c',465,475,640,640],69:['r',565,600,620,640],70:['r',520,600,620,640],71:['r',575,600,620,640]
  };
  var c9 = [
    ['r',1012,1040,1060,1070],['r',1012,1040,1060,1070],['r',985,1010,1060,1070],['r',925,925,1003,1030],['r',845,857,925,960],
    ['r',808,848,858,905],['r',785,818,822,865],['r',720,754,818,820],['c',730,752,818,820],['r',725,740,790,815],
    ['c',697,716,792,815],['r',725,748,795,820],['c',708,748,760,800],['r',725,732,740,775],['c',712,730,785,838],
    ['r',750,770,782,815],['c',742,745,838,855],['c',815,830,905,945],['r',815,818,910,915],['r',640,662,808,890],
    ['c',632,640,683,690],['c',630,705,705,710],['c',670,725,815,830],['c',800,815,828,885],['r',775,812,822,855],
    ['r',770,790,815,825],['r',725,735,805,840],['r',702,703,723,760],['m',298,298,706,730],['c',270,307,462,515],
    ['r',205,205,445,458],['c',165,282,282,360],['c',200,325,372,385],['r',290,358,385,388],['c',258,268,387,388],
    ['c',388,420,535,550],['c',470,515,615,640],['r',448,492,648,650],['c',308,478,548,560],['r',432,456,550,652],
    ['c',425,502,536,545],['c',520,537,568,600],['r',432,442,535,540],['c',396,454,454,545],['r',425,442,490,530],
    ['c',370,442,550,562],['r',430,460,555,615],['r',310,396,430,470],['r',198,330,386,388],['c',243,330,342,355],
    ['c',298,338,490,493],['r',362,392,455,482],['c',370,393,578,580],['r',445,452,545,560],['c',400,450,692,700],
    ['r',618,655,715,728],['c',640,640,765,800],['c',730,766,928,928],['c',788,863,863,925],['c',873,897,982,985],
    ['r',835,866,955,960],['r',735,797,830,895],['r',715,713,790,830],['c',670,712,752,760],['r',745,752,760,788],
    ['c',745,752,836,855],['r',785,812,832,872],['c',795,797,836,895],['r',725,725,825,828],['c',680,708,730,755],
    ['r',645,663,745,770],['r',575,590,648,670],['c',580,590,652,682],['r',600,608,642,690],['c',612,612,728,792],
    ['m',325,325,733,733]
  ];

  var cg = document.getElementById('candles');
  function candle(i, d, offY) {
    var x = 5.1 + 11.19 * i;
    var y = function (v) { return offY + v / 3; };
    var t = d[0], hi = y(d[1]), a = y(d[2]), b = y(d[3]), lo = y(d[4]);
    var ww = t === 'm' ? 8 : 7;
    el(cg, 'line', { x1: x, x2: x, y1: hi, y2: lo, class: 'c-wick-' + t });
    if (b - a < 3) {
      el(cg, 'line', { x1: x - 4, x2: x + 4, y1: a, y2: a, class: 'c-wick-' + t });
    } else {
      el(cg, 'rect', { x: x - ww / 2, y: a, width: ww, height: b - a, class: 'c-body-' + t });
    }
  }
  c8.forEach(function (d, i) { candle(i, d, 450); });
  Object.keys(c8b).forEach(function (i) { candle(+i, c8b[i], 450); });
  c9.forEach(function (d, i) { candle(72 + i, d, 300); });
  /* last two sessions */
  el(cg, 'line', { x1: 1655, x2: 1665, y1: 260, y2: 260, class: 'c-wick-m' });
  el(cg, 'line', { x1: 1670, x2: 1670, y1: 132, y2: 150, class: 'c-wick-m' });
  el(cg, 'rect', { x: 1666, y: 98, width: 8, height: 34, class: 'c-body-m' });

  /* ---------- sword bars ---------- */
  var sw = document.getElementById('grid-sword');
  [688, 1123, 1135, 1146, 1649].forEach(function (x) {
    el(sw, 'rect', { x: x - 3.5, y: 830, width: 7, height: 197, class: 'bar-sword' });
  });

  /* ---------- AD / AZ ---------- */
  var ad = document.getElementById('lines-adz');
  el(ad, 'line', { x1: 0, x2: 1670, y1: 1204, y2: 1204, class: 'zero' });
  line(ad, 'l-yellow', Z10, [10,522,25,505,50,505,68,490,85,505,105,505,122,520]);
  line(ad, 'l-yellow', Z10, [168,520,190,497,205,495,222,468,245,468,258,475,280,505,300,520,320,490,340,490,360,468,380,475,420,475,440,495,458,440,478,470,497,455,518,482,540,440,572,410,590,430,610,485,635,520,652,487,672,487,690,453,705,458,730,458,748,450,768,487,800,490,830,490,850,470,867,436,905,440,925,480,945,482,963,498,1000,498,1060,442,1085,462,1105,470,1140,472,1160,503,1178,417,1217,417,1237,450,1255,373,1277,373,1315,520,1340,480,1375,402,1395,437,1412,442,1432,490,1450,465,1470,458,1490,420,1520,375,1550,365,1568,420]);
  line(ad, 'l-yellow', Z11, [0,418,20,430,38,487,58,435,78,470,98,445,117,495,135,462,155,490,190,485,212,422,235,422,255,460,272,520]);
  line(ad, 'l-yellow', Z11, [295,520,345,440,388,225,407,260,428,88,448,305,467,305,487,445,525,445,545,520,565,445,585,445,603,372,623,450,645,450,660,458,680,460,700,422,720,482,740,440,757,425,777,360,797,395,815,458,835,480,855,482,877,432,895,472,915,447,935,490,953,490,972,520]);
  line(ad, 'l-yellow', Z11, [993,520,1050,442,1070,462,1090,470,1110,495,1128,463,1148,487,1165,445,1187,482,1205,445,1225,453,1265,453,1285,488,1305,327,1325,365,1342,110]);
  line(ad, 'l-red', Z10, [8,585,30,548,50,532,68,503,88,530,105,530,125,565,145,580,165,595,185,560,205,525,222,468,245,468,262,490,285,535,302,560,320,520,340,540,360,503,380,512,400,495,420,490,437,537,458,465,478,520,497,480,518,508,540,440,572,410,590,450,610,530,633,612,652,545,672,535,690,483,725,490,748,482,770,540,810,560,828,552,850,495,867,462,905,478,925,520,945,508,963,558,985,565,1005,555,1025,505,1045,480,1062,442,1085,478,1100,490,1120,490,1160,625,1178,540,1197,670,1217,715,1238,745,1255,455,1277,440,1315,700,1345,520,1375,402,1395,465,1412,472,1432,545,1450,490,1470,485,1490,420,1520,373,1550,363,1568,450]);
  line(ad, 'l-red', Z11, [0,458,20,470,38,565,58,470,78,530,98,472,117,558,135,497,155,558,170,550,195,548,212,455,235,458,250,520,275,622,290,618,310,565,345,440,388,225,408,510,428,335,448,668,467,535,487,670,505,615,525,595,545,740,565,605,585,565,603,425,623,562,643,545,662,558,680,545,700,470,720,580,740,490,757,470,777,360,797,440,815,560,835,578,855,590,877,483,895,585,915,505,935,580,953,558,972,618,990,618,1010,555,1050,442,1070,505,1090,510,1110,562,1128,495,1148,552,1165,485,1187,548,1205,475,1225,483,1245,490,1265,490,1285,582,1305,385,1325,422,1342,110]);
})();
```
